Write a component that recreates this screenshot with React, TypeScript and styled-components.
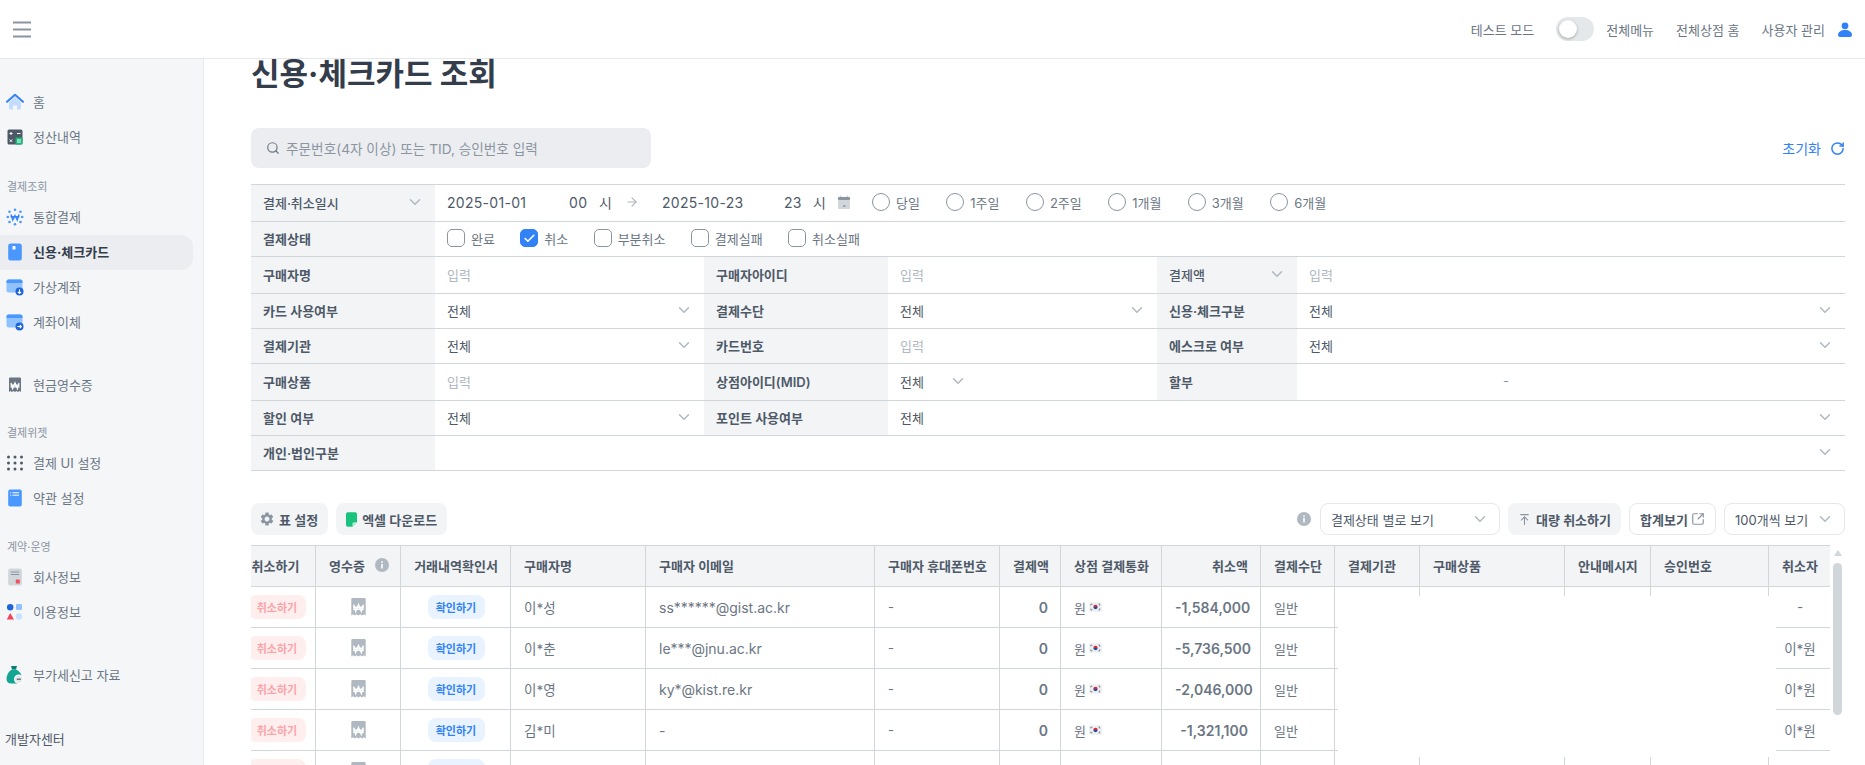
import React from 'react';
import styled, { createGlobalStyle } from 'styled-components';
import { ArrowRight, ArrowUpToLine, Check, ChevronDown, RotateCw, Search, SquareArrowOutUpRight } from 'lucide-react';
import { MdSettings } from 'react-icons/md';

const GlobalStyle = createGlobalStyle`
  html, body { margin: 0; padding: 0; background: #fff; }
  body { font-family: Inter, "Noto Sans CJK KR", sans-serif; color: #4e5968; }
  * { box-sizing: border-box; }
`;

const Page = styled.div`
  height: 100vh;
  overflow: hidden;
  display: flex;
  flex-direction: column;
`;

/* top bar */
const TopBar = styled.header`
  height: 59px;
  flex: none;
  display: flex;
  align-items: center;
  justify-content: space-between;
  padding: 0 13px 0 13px;
  border-bottom: 1px solid #e5e8eb;
  background: #fff;
`;
const TopRight = styled.div`
  display: flex;
  align-items: center;
  font-size: 13px;
  color: #6b7684;
`;
const TopLink = styled.span<{ $ml: number }>`
  margin-left: ${p => p.$ml}px;
`;
const Toggle = styled.span`
  position: relative;
  width: 38px;
  height: 24px;
  margin-left: 22px;
  border-radius: 12px;
  background: #e5e8eb;
  &::after {
    content: '';
    position: absolute;
    left: 3px;
    top: 3px;
    width: 18px;
    height: 18px;
    border-radius: 50%;
    background: #fff;
    box-shadow: 0 1px 3px rgba(0, 0, 0, .3);
  }
`;
const UserGlyph = styled.svg`
  margin-left: 13px;
  width: 14px;
  height: 15px;
  fill: #3182f6;
`;

const Body = styled.div`
  flex: 1;
  display: flex;
  min-height: 0;
`;

/* sidebar */
const Sidebar = styled.nav`
  width: 204px;
  flex: none;
  padding-top: 26px;
  background: #f5f6f8;
  border-right: 1px solid #e9ebee;
`;
const NavItem = styled.div<{ $active?: boolean; $mt?: number }>`
  width: 193px;
  height: 35px;
  margin-top: ${p => p.$mt ?? 0}px;
  padding: 0 0 2px 6px;
  display: flex;
  align-items: center;
  gap: 9px;
  font-size: 13px;
  font-weight: ${p => (p.$active ? 700 : 400)};
  color: ${p => (p.$active ? '#333d4b' : '#6b7684')};
  background: ${p => (p.$active ? '#ebedf0' : 'transparent')};
  border-radius: 0 12px 12px 0;
`;
const NavGlyph = styled.svg`
  width: 18px;
  height: 18px;
  flex: none;
`;
const GroupLabel = styled.div<{ $mt: number }>`
  height: 20px;
  line-height: 20px;
  margin: ${p => p.$mt}px 0 3px;
  padding-left: 7px;
  font-size: 11px;
  color: #8b95a1;
`;
const DevCenter = styled.div`
  height: 20px;
  line-height: 20px;
  margin-top: 36px;
  padding-left: 5px;
  font-size: 13px;
  color: #4e5968;
`;

/* main */
const Main = styled.main`
  flex: 1;
  min-width: 0;
  padding: 0 20px 0 47px;
`;
const Title = styled.h1`
  margin: 0;
  height: 30px;
  line-height: 30px;
  font-size: 31px;
  font-weight: 700;
  color: #333d4b;
`;
const SearchRow = styled.div`
  margin-top: 39px;
  display: flex;
  align-items: center;
  justify-content: space-between;
`;
const SearchBox = styled.div`
  width: 400px;
  height: 40px;
  padding-left: 15px;
  display: flex;
  align-items: center;
  gap: 6px;
  border-radius: 8px;
  background: #ebedf0;
  font-size: 13.65px;
  color: #8b95a1;
`;
const ResetLink = styled.div`
  display: flex;
  align-items: center;
  gap: 9px;
  font-size: 14px;
  color: #3182f6;
`;

/* filter grid */
const FilterGrid = styled.section`
  margin-top: 16px;
  border-top: 1px solid #d1d6db;
  display: grid;
  grid-template-columns: 184px 269px 184px 269px 140px 1fr;
  grid-template-rows: 37px 35px 37px 35px 35px 37px 35px 35px;
`;
const Label = styled.div<{ $plain?: boolean }>`
  display: flex;
  align-items: center;
  justify-content: space-between;
  padding: 0 11px 2px 12px;
  background: #f2f4f6;
  border-bottom: 1px solid #d1d6db;
  font-size: 13px;
  font-weight: ${p => (p.$plain ? 500 : 600)};
  color: #4e5968;
`;
const Value = styled.div<{ $span?: number; $muted?: boolean }>`
  grid-column: span ${p => p.$span ?? 1};
  display: flex;
  align-items: center;
  justify-content: space-between;
  padding: 0 11px 2px 12px;
  border-bottom: 1px solid #d1d6db;
  font-size: 13px;
  color: ${p => (p.$muted ? '#b0b8c1' : '#4e5968')};
`;
const FlowValue = styled(Value)`
  justify-content: flex-start;
`;
const OptionRow = styled.div<{ $gap: number }>`
  display: flex;
  align-items: center;
  gap: ${p => p.$gap}px;
`;
const Option = styled.label`
  display: flex;
  align-items: center;
  gap: 6px;
  color: #6b7684;
`;
const Radio = styled.span`
  width: 18px;
  height: 18px;
  border-radius: 50%;
  border: 1.5px solid #8b95a1;
`;
const CheckBox = styled.span<{ $on?: boolean }>`
  width: 18px;
  height: 18px;
  border-radius: 5px;
  display: flex;
  align-items: center;
  justify-content: center;
  color: #fff;
  border: 1.5px solid ${p => (p.$on ? '#3182f6' : '#8b95a1')};
  background: ${p => (p.$on ? '#3182f6' : '#fff')};
`;
const DateValue = styled.span<{ $w: number }>`
  width: ${p => p.$w}px;
  flex: none;
  font-size: 14px;
  letter-spacing: .3px;
  color: #4e5968;
`;
const CalendarGlyph = styled.svg`
  width: 12px;
  height: 14px;
  flex: none;
  margin-right: 22px;
`;
const RangeArrow = styled(ArrowRight)`
  flex: none;
  margin-right: 23px;
  color: #b0b8c1;
`;
const ShortSelect = styled.div`
  width: 67px;
  display: flex;
  align-items: center;
  justify-content: space-between;
`;
const Dash = styled.span`
  margin-left: 194px;
  color: #8b95a1;
`;
const Chevron = styled(ChevronDown)`
  flex: none;
  color: #b0b8c1;
`;

/* toolbar */
const Toolbar = styled.div`
  margin-top: 32px;
  height: 32px;
  display: flex;
  align-items: center;
  justify-content: space-between;
`;
const ToolGroup = styled.div`
  display: flex;
  align-items: center;
  gap: 8px;
`;
const SoftButton = styled.div`
  height: 32px;
  padding: 0 10px;
  display: flex;
  align-items: center;
  gap: 5px;
  border-radius: 8px;
  background: #f2f4f6;
  font-size: 13px;
  font-weight: 600;
  color: #4e5968;
`;
const Gear = styled(MdSettings)`
  margin: 0 -1px 0 -2px;
  color: #8b95a1;
`;
const LineButton = styled.div<{ $w: number; $strong?: boolean }>`
  width: ${p => p.$w}px;
  height: 32px;
  padding: 0 10px;
  display: flex;
  align-items: center;
  justify-content: space-between;
  border: 1px solid #e5e8eb;
  border-radius: 8px;
  font-size: 13px;
  font-weight: ${p => (p.$strong ? 600 : 400)};
  color: #4e5968;
`;
const InfoGlyph = styled.svg`
  width: 14px;
  height: 14px;
  flex: none;
`;
const ToolInfo = styled(InfoGlyph)`
  margin-right: 1px;
`;

/* data table */
const TableArea = styled.div`
  margin-top: 10px;
  display: flex;
  gap: 3px;
`;
const TableClip = styled.div`
  position: relative;
  width: 1579px;
  height: 220px;
  flex: none;
  overflow: hidden;
`;
const Table = styled.table`
  width: 1595px;
  margin-left: -16px;
  table-layout: fixed;
  border-collapse: separate;
  border-spacing: 0;
`;
const Th = styled.th<{ $align?: string }>`
  height: 42px;
  padding: 0 12px 2px 13px;
  background: #f2f4f6;
  border-top: 1px solid #d1d6db;
  border-bottom: 1px solid #d1d6db;
  border-right: 1px solid #d1d6db;
  font-size: 13px;
  font-weight: 600;
  color: #4e5968;
  white-space: nowrap;
  text-align: ${p => p.$align ?? 'left'};
  &:last-child { border-right: 0; }
`;
const Td = styled.td<{ $align?: string; $size?: number; $num?: boolean }>`
  height: 41px;
  padding: 0 12px 0 13px;
  border-bottom: 1px solid #d1d6db;
  border-right: 1px solid #d1d6db;
  font-size: ${p => p.$size ?? 13}px;
  font-weight: ${p => (p.$num ? 600 : 400)};
  color: #6b7684;
  white-space: nowrap;
  text-align: ${p => p.$align ?? 'left'};
  &:last-child { border-right: 0; }
`;
const HeadInfo = styled.span`
  display: inline-flex;
  align-items: center;
  gap: 10px;
`;
const Pill = styled.span<{ $kind: 'cancel' | 'confirm' }>`
  display: inline-flex;
  align-items: center;
  justify-content: center;
  width: ${p => (p.$kind === 'cancel' ? 58 : 57)}px;
  height: 24px;
  border-radius: 8px;
  font-size: 11px;
  font-weight: 600;
  vertical-align: middle;
  background: ${p => (p.$kind === 'cancel' ? '#ffeeee' : '#e8f3ff')};
  color: ${p => (p.$kind === 'cancel' ? '#fba4a9' : '#3182f6')};
`;
const ReceiptCellGlyph = styled.svg`
  width: 15px;
  height: 18px;
  display: inline-block;
  vertical-align: middle;
`;
const Currency = styled.span`
  display: flex;
  align-items: center;
  gap: 3px;
`;
const FlagGlyph = styled.svg`
  width: 13px;
  height: 10px;
  flex: none;
`;
const RedactedArea = styled.div`
  position: absolute;
  left: 1087px;
  top: 51px;
  width: 438px;
  height: 161px;
  background: #fff;
`;
const ScrollRail = styled.div`
  width: 9px;
  flex: none;
  display: flex;
  flex-direction: column;
  align-items: center;
`;
const ScrollUp = styled.span`
  margin-top: 5px;
  width: 0;
  height: 0;
  border-left: 4px solid transparent;
  border-right: 4px solid transparent;
  border-bottom: 6px solid #d1d6db;
`;
const ScrollThumb = styled.span`
  margin-top: 7px;
  width: 9px;
  height: 152px;
  border-radius: 5px;
  background: #d1d6db;
`;

/* drawings */
const Won = ({ color = '#fff' }: { color?: string }) => (
  <path d="M5 7l1.6 5.5L9 7l2.4 5.5L13 7M4.5 9.2h9M4.5 10.8h9" fill="none" stroke={color} strokeWidth="1.3" />
);
const ReceiptShape = ({ fill }: { fill: string }) => (
  <>
    <path d="M3 2.5a1 1 0 0 1 1-1h10a1 1 0 0 1 1 1V16l-1.5-1-1.5 1-1.5-1-1.5 1-1.5-1-1.5 1-1.5-1L3 16z" fill={fill} />
    <Won />
  </>
);
const icons: Record<string, React.ReactNode> = {
  home: (
    <>
      <path d="M3 9.5 9 4l6 5.5V15a1.5 1.5 0 0 1-1.5 1.5H11v-4H7v4H4.5A1.5 1.5 0 0 1 3 15z" fill="#c4dcff" />
      <path d="M1 8.8 9 1.8l8 7" fill="none" stroke="#3182f6" strokeWidth="2" strokeLinecap="round" strokeLinejoin="round" />
    </>
  ),
  calc: (
    <>
      <rect x="1.5" y="1.5" width="15" height="15" rx="1.5" fill="#4e5968" />
      <rect x="9.5" y="9.5" width="7" height="7" rx="1" fill="#19b57a" />
      <path d="M3.5 5.5h3M5 4v3M11 5.5h3.5M3.8 11.5l2.4 2.4M6.2 11.5l-2.4 2.4M11 12h4M11 14h4" stroke="#fff" strokeWidth="1" />
    </>
  ),
  unified: (
    <>
      {[[9, 1.8], [3.5, 3.8], [14.5, 3.8], [1.8, 9], [16.2, 9], [3.5, 14], [14.5, 14], [9, 16.2]].map(([x, y]) => (
        <circle key={`${x}-${y}`} cx={x} cy={y} r="1.3" fill="#4a97ff" />
      ))}
      <path d="M5 6.5l1.8 5.5L9 7.5l2.2 4.5L13 6.5M4.5 8.8h9" fill="none" stroke="#3182f6" strokeWidth="1.4" />
    </>
  ),
  card: (
    <>
      <rect x="2.2" y="0.5" width="13.6" height="17" rx="2.5" fill="#4a97ff" />
      <rect x="6.5" y="3" width="3" height="3.5" rx=".5" fill="#fff" />
    </>
  ),
  vaccount: (
    <>
      <rect x="0.5" y="1.5" width="16" height="13" rx="2" fill="#90c2ff" />
      <path d="M.5 3.5a2 2 0 0 1 2-2h12a2 2 0 0 1 2 2V5H.5z" fill="#4a97ff" />
      <circle cx="13.5" cy="13.5" r="4" fill="#1b64da" />
      <path d="M13.5 11.3v4M11.8 13.8l1.7 1.6 1.7-1.6" fill="none" stroke="#fff" strokeWidth="1.1" />
    </>
  ),
  transfer: (
    <>
      <rect x="0.5" y="1.5" width="16" height="13" rx="2" fill="#90c2ff" />
      <path d="M.5 3.5a2 2 0 0 1 2-2h12a2 2 0 0 1 2 2V5H.5z" fill="#4a97ff" />
      <circle cx="13.5" cy="13.5" r="4" fill="#1b64da" />
      <path d="M11.3 13.5h4M13.8 11.8l1.6 1.7-1.6 1.7" fill="none" stroke="#fff" strokeWidth="1.1" />
    </>
  ),
  receipt: <ReceiptShape fill="#6b7684" />,
  dots: (
    <>
      {[2.5, 9, 15.5].flatMap(x => [3, 9, 15].map(y => <circle key={`${x}-${y}`} cx={x} cy={y} r="1.5" fill="#4e5968" />))}
    </>
  ),
  terms: (
    <>
      <rect x="2.2" y="0.5" width="13.6" height="17" rx="2" fill="#4a97ff" />
      <path d="M6.5 3.8H13M6.5 6.2H13" stroke="#fff" strokeWidth="1" />
      <path d="M4.2 3.8h1M4.2 6.2h1" stroke="#fff" strokeWidth="1" />
    </>
  ),
  company: (
    <>
      <rect x="2.2" y="0.5" width="13.6" height="17" rx="2" fill="#d1d6db" />
      <path d="M4.8 4h8.4M4.8 6.5h8.4" stroke="#8b95a1" strokeWidth="1" />
      <rect x="9.8" y="11.5" width="4" height="4" rx=".6" fill="#f0525f" />
    </>
  ),
  usage: (
    <>
      <circle cx="4.2" cy="4.2" r="3.2" fill="#1b64da" />
      <rect x="10" y="1" width="6" height="6" rx="1" fill="#90c2ff" />
      <path d="M4.2 10 8 16.5H.8z" fill="#f0445a" />
      <circle cx="13" cy="13.5" r="3.2" fill="#c9e2ff" />
    </>
  ),
  tax: (
    <>
      <path d="M5 0h6l-1 3.500H6z" fill="#0e7c74" />
      <path d="M6 3.500h4c3.500 1.500 6 5 6 8.500 0 3.500-2.500 5.500-6 5.500H5.500C2.500 17.500.5 16 .5 13c0-4 2.500-8 5.500-9.500z" fill="#12a594" />
      <circle cx="12.800" cy="13.200" r="4.800" fill="#fff" />
      <circle cx="12.800" cy="13.200" r="3.700" fill="#e5e8eb" />
      <path d="M10.800 13.200h4" stroke="#4e5968" strokeWidth="1.200" />
    </>
  ),
};

const Info = () => (
  <>
    <circle cx="7" cy="7" r="7" fill="#b0b8c1" />
    <rect x="6.2" y="6" width="1.6" height="4.5" fill="#fff" />
    <rect x="6.2" y="3.4" width="1.6" height="1.6" fill="#fff" />
  </>
);

const Nav = ({ icon, label, active, mt }: { icon: string; label: string; active?: boolean; mt?: number }) => (
  <NavItem $active={active} $mt={mt}>
    <NavGlyph viewBox="0 0 18 18">{icons[icon]}</NavGlyph>
    {label}
  </NavItem>
);

const columns = [81, 85, 110, 135, 229, 125, 61, 101, 99, 74, 85, 145, 86, 118, 61];

const rows = [
  { name: '이*성', email: 'ss******@gist.ac.kr', amount: '-1,584,000', by: '-' },
  { name: '이*춘', email: 'le***@jnu.ac.kr', amount: '-5,736,500', by: '이*원' },
  { name: '이*영', email: 'ky*@kist.re.kr', amount: '-2,046,000', by: '이*원' },
  { name: '김*미', email: '-', amount: '-1,321,100', by: '이*원' },
  { name: '이*원', email: '-', amount: '-1,100,000', by: '이*원' },
];

const Flag = () => (
  <FlagGlyph viewBox="0 0 15 11">
    <rect width="15" height="11" rx="1" fill="#eef0f2" />
    <path d="M5 5.5a2.5 2.5 0 0 1 5 0z" fill="#d8263a" />
    <path d="M5 5.5a2.5 2.5 0 0 0 5 0z" fill="#1b4fa8" />
    <path d="M1.5 3l1.5-1.5M2.3 3.6l1.5-1.5M11.500 1.600 13 3M11 2.200l1.500 1.400M1.500 8l1.500 1.500M2.300 7.400l1.500 1.500M11.500 9.400 13 8M11 8.800l1.500-1.400" stroke="#333d4b" strokeWidth=".7" />
  </FlagGlyph>
);

export default function App() {
  return (
    <Page>
      <GlobalStyle />
      <TopBar>
        <svg width="18" height="18" viewBox="0 0 18 18">
          <path d="M0 2.5h18M0 9.5h18M0 16.5h18" stroke="#8b95a1" strokeWidth="2" />
        </svg>
        <TopRight>
          <span>테스트 모드</span>
          <Toggle />
          <TopLink $ml={12}>전체메뉴</TopLink>
          <TopLink $ml={22}>전체상점 홈</TopLink>
          <TopLink $ml={22}>사용자 관리</TopLink>
          <UserGlyph viewBox="0 0 14 15">
            <circle cx="7" cy="3.8" r="3.4" />
            <path d="M0 13c0-3 3-5 7-5s7 2 7 5c0 1.300-1 2-2 2H2c-1 0-2-.7-2-2z" />
          </UserGlyph>
        </TopRight>
      </TopBar>
      <Body>
        <Sidebar>
          <Nav icon="home" label="홈" />
          <Nav icon="calc" label="정산내역" />
          <GroupLabel $mt={22}>결제조회</GroupLabel>
          <Nav icon="unified" label="통합결제" />
          <Nav icon="card" label="신용·체크카드" active />
          <Nav icon="vaccount" label="가상계좌" />
          <Nav icon="transfer" label="계좌이체" />
          <Nav icon="receipt" label="현금영수증" mt={28} />
          <GroupLabel $mt={20}>결제위젯</GroupLabel>
          <Nav icon="dots" label="결제 UI 설정" />
          <Nav icon="terms" label="약관 설정" />
          <GroupLabel $mt={21}>계약·운영</GroupLabel>
          <Nav icon="company" label="회사정보" />
          <Nav icon="usage" label="이용정보" />
          <Nav icon="tax" label="부가세신고 자료" mt={28} />
          <DevCenter>개발자센터</DevCenter>
        </Sidebar>
        <Main>
          <Title>신용·체크카드 조회</Title>
          <SearchRow>
            <SearchBox>
              <Search size={14} color="#6b7684" />
              주문번호(4자 이상) 또는 TID, 승인번호 입력
            </SearchBox>
            <ResetLink>
              초기화
              <RotateCw size={15} strokeWidth={2.4} />
            </ResetLink>
          </SearchRow>

          <FilterGrid>
            <Label $plain>결제·취소일시<Chevron size={18} /></Label>
            <FlowValue $span={5}>
              <DateValue $w={122}>2025-01-01</DateValue>
              <DateValue $w={30}>00</DateValue>
              <DateValue $w={26}>시</DateValue>
              <RangeArrow size={14} />
              <DateValue $w={122}>2025-10-23</DateValue>
              <DateValue $w={29}>23</DateValue>
              <DateValue $w={25}>시</DateValue>
              <CalendarGlyph viewBox="0 0 12 14">
                <path d="M2 .5h1.500V2h5V.5H10V2h.5A1.500 1.500 0 0 1 12 3.500v9a1.500 1.500 0 0 1-1.500 1.500h-9A1.500 1.500 0 0 1 0 12.500v-9A1.500 1.500 0 0 1 1.500 2H2z" fill="#d1d6db" />
                <rect y="2" width="12" height="3" rx="1" fill="#8b95a1" />
                <rect x="5" y="10.500" width="2.500" height="1" fill="#6b7684" />
              </CalendarGlyph>
              <OptionRow $gap={26.4}>
                {['당일', '1주일', '2주일', '1개월', '3개월', '6개월'].map(t => (
                  <Option key={t}><Radio />{t}</Option>
                ))}
              </OptionRow>
            </FlowValue>

            <Label>결제상태</Label>
            <FlowValue $span={5}>
              <OptionRow $gap={25.4}>
                {['완료', '취소', '부분취소', '결제실패', '취소실패'].map(t => (
                  <Option key={t}>
                    <CheckBox $on={t === '취소'}>{t === '취소' && <Check size={13} strokeWidth={3} />}</CheckBox>
                    {t}
                  </Option>
                ))}
              </OptionRow>
            </FlowValue>

            <Label>구매자명</Label>
            <Value $muted>입력</Value>
            <Label>구매자아이디</Label>
            <Value $muted>입력</Value>
            <Label $plain>결제액<Chevron size={18} /></Label>
            <Value $muted>입력</Value>

            <Label>카드 사용여부</Label>
            <Value>전체<Chevron size={18} /></Value>
            <Label>결제수단</Label>
            <Value>전체<Chevron size={18} /></Value>
            <Label>신용·체크구분</Label>
            <Value>전체<Chevron size={18} /></Value>

            <Label>결제기관</Label>
            <Value>전체<Chevron size={18} /></Value>
            <Label>카드번호</Label>
            <Value $muted>입력</Value>
            <Label>에스크로 여부</Label>
            <Value>전체<Chevron size={18} /></Value>

            <Label>구매상품</Label>
            <Value $muted>입력</Value>
            <Label>상점아이디(MID)</Label>
            <FlowValue><ShortSelect>전체<Chevron size={18} /></ShortSelect></FlowValue>
            <Label>할부</Label>
            <FlowValue><Dash>-</Dash></FlowValue>

            <Label>할인 여부</Label>
            <Value>전체<Chevron size={18} /></Value>
            <Label>포인트 사용여부</Label>
            <Value $span={3}>전체<Chevron size={18} /></Value>

            <Label>개인·법인구분</Label>
            <Value $span={5}><span /><Chevron size={18} /></Value>
          </FilterGrid>

          <Toolbar>
            <ToolGroup>
              <SoftButton><Gear size={16} />표 설정</SoftButton>
              <SoftButton>
                <svg width="11" height="15" viewBox="0 0 12 16">
                  <path d="M2 0h8a2 2 0 0 1 2 2v9l-5 5H2a2 2 0 0 1-2-2V2a2 2 0 0 1 2-2z" fill="#19c37d" />
                  <path d="M7 16v-3a2 2 0 0 1 2-2h3" fill="#b8ecd4" />
                </svg>
                엑셀 다운로드
              </SoftButton>
            </ToolGroup>
            <ToolGroup>
              <ToolInfo viewBox="0 0 14 14"><Info /></ToolInfo>
              <LineButton $w={180}>결제상태 별로 보기<Chevron size={18} /></LineButton>
              <SoftButton><ArrowUpToLine size={13} color="#8b95a1" />대량 취소하기</SoftButton>
              <LineButton $w={87} $strong>합계보기<SquareArrowOutUpRight size={14} color="#8b95a1" /></LineButton>
              <LineButton $w={121}>100개씩 보기<Chevron size={18} /></LineButton>
            </ToolGroup>
          </Toolbar>

          <TableArea>
            <TableClip>
              <Table>
                <colgroup>
                  {columns.map((w, i) => <col key={i} width={w} />)}
                </colgroup>
                <thead>
                  <tr>
                    <Th $align="center">취소하기</Th>
                    <Th $align="center">
                      <HeadInfo>영수증<InfoGlyph viewBox="0 0 14 14"><Info /></InfoGlyph></HeadInfo>
                    </Th>
                    <Th $align="center">거래내역확인서</Th>
                    <Th>구매자명</Th>
                    <Th>구매자 이메일</Th>
                    <Th>구매자 휴대폰번호</Th>
                    <Th $align="right">결제액</Th>
                    <Th>상점 결제통화</Th>
                    <Th $align="right">취소액</Th>
                    <Th>결제수단</Th>
                    <Th>결제기관</Th>
                    <Th>구매상품</Th>
                    <Th>안내메시지</Th>
                    <Th>승인번호</Th>
                    <Th $align="center">취소자</Th>
                  </tr>
                </thead>
                <tbody>
                  {rows.map(r => (
                    <tr key={r.amount}>
                      <Td $align="center"><Pill $kind="cancel">취소하기</Pill></Td>
                      <Td $align="center">
                        <ReceiptCellGlyph viewBox="3 1.5 12 15"><ReceiptShape fill="#b0b8c1" /></ReceiptCellGlyph>
                      </Td>
                      <Td $align="center"><Pill $kind="confirm">확인하기</Pill></Td>
                      <Td $size={13.5}>{r.name}</Td>
                      <Td $size={14}>{r.email}</Td>
                      <Td>-</Td>
                      <Td $align="right" $num $size={14}>0</Td>
                      <Td><Currency>원<Flag /></Currency></Td>
                      <Td $align="right" $num $size={14}>{r.amount}</Td>
                      <Td>일반</Td>
                      <Td />
                      <Td />
                      <Td />
                      <Td />
                      <Td $align="center" $size={13.5}>{r.by}</Td>
                    </tr>
                  ))}
                </tbody>
              </Table>
              <RedactedArea />
            </TableClip>
            <ScrollRail>
              <ScrollUp />
              <ScrollThumb />
            </ScrollRail>
          </TableArea>
        </Main>
      </Body>
    </Page>
  );
}
